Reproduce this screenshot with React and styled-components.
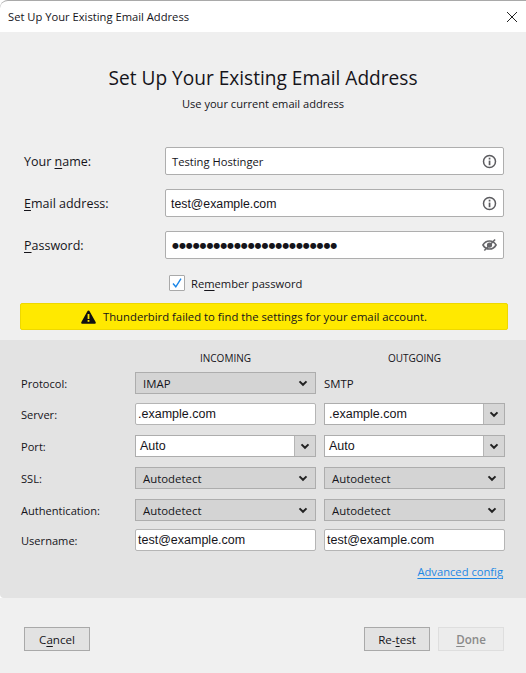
import React from "react";
import styled, { createGlobalStyle } from "styled-components";

const Global = createGlobalStyle`
  html, body { margin: 0; padding: 0; background: #fff; }
  body { font-family: "Open Sans", "Noto Sans", "Liberation Sans", sans-serif; color: #15141a; }
  * { box-sizing: border-box; }
`;

const Window = styled.div`
  width: 526px;
  height: 673px;
  display: flex;
  flex-direction: column;
  overflow: hidden;
`;

const TitleBar = styled.div`
  height: 32px;
  flex: none;
  display: flex;
  align-items: center;
  justify-content: space-between;
  padding: 0 8px 0 8px;
  background: #fff;
  border-top: 1px solid #a9a9a9;
  border-top-left-radius: 8px;
  font-size: 11.2px;
`;

const Intro = styled.div`
  height: 115px;
  flex: none;
  padding-top: 33px;
  text-align: center;
  background: #efefef;
`;

const Heading = styled.div`
  font-size: 19.1px;
  line-height: 26px;
`;

const Sub = styled.div`
  font-size: 11.1px;
  line-height: 16px;
  margin-top: 5px;
`;

const Form = styled.div`
  height: 193px;
  flex: none;
  padding: 0 18px 0 24px;
  display: flex;
  flex-direction: column;
  background: #efefef;
`;

const Row = styled.div`
  display: grid;
  grid-template-columns: 141px 339px;
  align-items: center;
  height: 28px;
  margin-bottom: 14px;
  font-size: 12.5px;
`;

const Field = styled.div`
  height: 28px;
  display: flex;
  align-items: center;
  justify-content: space-between;
  padding: 0 6px 0 5px;
  background: #fff;
  border: 1px solid #aeaeae;
  border-radius: 2px;
`;

const Value = styled.span`
  font-family: ${(p) => (p.$typed ? '"Liberation Sans", sans-serif' : "inherit")};
  font-size: ${(p) => (p.$typed ? "12.3px" : "11.2px")};
  margin: ${(p) => (p.$typed ? "2px 0 0 0" : "0 0 0 1px")};
`;

const Dots = styled.span`
  font-family: "DejaVu Sans", sans-serif;
  font-size: 7.9px;
  margin-left: 1px;
`;

const U = styled.span`
  text-decoration: underline;
  text-underline-offset: 2px;
`;

const Remember = styled.div`
  display: flex;
  align-items: center;
  gap: 6px;
  margin: 2px 0 0 145px;
  font-size: 11.2px;
  height: 16px;
`;

const Check = styled.span`
  width: 16px;
  height: 16px;
  display: flex;
  align-items: center;
  justify-content: center;
  background: #fff;
  border: 1px solid #a9a9a9;
  border-radius: 1px;
`;

const Warning = styled.div`
  height: 27px;
  margin: 12px 0 0 -4px;
  width: 488px;
  display: flex;
  align-items: center;
  justify-content: center;
  gap: 7px;
  padding-right: 20px;
  background: #ffe900;
  border: 1px solid #eed800;
  border-radius: 2px;
  font-size: 11.3px;
`;

const Panel = styled.div`
  height: 258px;
  flex: none;
  padding: 10px 21px 0 21px;
  background: #e3e3e3;
  border-radius: 0 0 0 4px;
  font-size: 11.1px;
  display: grid;
  grid-template-columns: 114px 181px 189px;
  grid-auto-rows: auto;
  align-content: start;
`;

const Head = styled.div`
  font-size: 10px;
  font-weight: 500;
  text-align: center;
  line-height: 16px;
  margin-left: ${(p) => (p.$second ? "8px" : "0")};
`;

const Label = styled.div`
  display: flex;
  align-items: center;
  margin-top: ${(p) => p.$top || 0}px;
  height: 22px;
`;

const Cell = styled.div`
  margin-top: ${(p) => p.$top || 0}px;
  margin-left: ${(p) => (p.$second ? "8px" : "0")};
  height: 22px;
  font-size: 11.4px;
  display: flex;
  align-items: center;
  min-width: 0;
`;

const Select = styled.div`
  flex: 1;
  height: 22px;
  display: flex;
  align-items: center;
  justify-content: space-between;
  padding: 0 7px 0 7px;
  background: #d4d4d4;
  border: 1px solid #adadad;
`;

const TextBox = styled.div`
  flex: 1;
  height: 22px;
  display: flex;
  align-items: center;
  padding: 0 2px 1px;
  background: #fff;
  border: 1px solid #b5b5b5;
  border-radius: 2px;
  overflow: hidden;
  font-family: "Liberation Sans", sans-serif;
  font-size: 12.5px;
`;

const Combo = styled.div`
  flex: 1;
  height: 22px;
  display: flex;
  align-items: stretch;
  background: #fff;
  border: 1px solid #adadad;
`;

const ComboText = styled.div`
  flex: 1;
  display: flex;
  align-items: center;
  padding-left: 4px;
  font-family: "Liberation Sans", sans-serif;
  font-size: 12.5px;
`;

const ComboArrow = styled.div`
  width: 21px;
  display: flex;
  align-items: center;
  justify-content: center;
  background: #d6d6d6;
  border-left: 1px solid #b5b5b5;
`;

const Advanced = styled.div`
  grid-column: 1 / -1;
  text-align: right;
  color: #1e88e5;
  font-size: 11.2px;
  line-height: 16px;
  padding: 13px 2px 0 0;
`;

const Footer = styled.div`
  flex: 1;
  display: flex;
  align-items: flex-start;
  gap: 8px;
  padding: 29px 22px 0 24px;
  background: #f0f0f0;
`;

const Button = styled.div`
  width: 66px;
  height: 24px;
  display: flex;
  align-items: center;
  justify-content: center;
  background: ${(p) => (p.$disabled ? "#ececec" : "#e2e2e2")};
  border: 1px solid ${(p) => (p.$disabled ? "#dedede" : "#a9a9a9")};
  color: ${(p) => (p.$disabled ? "#8a8a8a" : "#15141a")};
  font-weight: ${(p) => (p.$disabled ? 600 : 400)};
  font-size: 11.6px;
  margin-right: ${(p) => (p.$push ? "auto" : 0)};
`;

const Chevron = () => (
  <svg width="10" height="7" viewBox="0 0 10 7" fill="none">
    <path d="M1.500 1.400 5 4.800l3.500-3.400" stroke="#222" strokeWidth="2" />
  </svg>
);

const Info = () => (
  <svg width="15" height="15" viewBox="0 0 15 15" fill="none">
    <circle cx="7.500" cy="7.500" r="6" stroke="#5b5b5f" strokeWidth="1.500" />
    <rect x="6.700" y="6.600" width="1.700" height="4.600" fill="#5b5b5f" />
    <rect x="6.700" y="3.700" width="1.700" height="1.800" fill="#5b5b5f" />
  </svg>
);

const EyeOff = () => (
  <svg width="15" height="14" viewBox="0 0 16 14" fill="none">
    <path d="M1 7c1.600-2.800 4-4.300 7-4.300S13.400 4.200 15 7c-1.600 2.800-4 4.300-7 4.300S2.600 9.800 1 7Z" stroke="#66666a" strokeWidth="1.700" />
    <circle cx="8" cy="7" r="2.800" fill="#66666a" />
    <path d="M2.500 12.800 14 1.200" stroke="#66666a" strokeWidth="1.700" />
  </svg>
);

const Tick = () => (
  <svg width="12" height="12" viewBox="0 0 12 12" fill="none">
    <path d="M2 6.500 4.800 9.800 10 1.600" stroke="#1a86e8" strokeWidth="1.400" />
  </svg>
);

const WarnIcon = () => (
  <svg width="15" height="14" viewBox="0 0 15 14">
    <path d="M7.500.6c.5 0 .9.3 1.100.7l6 10.800c.5.800-.1 1.700-1 1.700H1.400c-.9 0-1.500-.9-1-1.700l6-10.800c.2-.4.600-.7 1.100-.7Z" fill="#111" />
    <rect x="6.600" y="4" width="1.800" height="5" fill="#ffe900" />
    <rect x="6.600" y="10" width="1.800" height="1.800" fill="#ffe900" />
  </svg>
);

const Close = () => (
  <svg width="12" height="12" viewBox="0 0 12 12" fill="none">
    <path d="M1 1l10 10M11 1 1 11" stroke="#222" strokeWidth="1" />
  </svg>
);

const rows = [
  { label: "SSL:", top: 10, a: "Autodetect", b: "Autodetect" },
  { label: "Authentication:", top: 10, a: "Autodetect", b: "Autodetect" },
];

export default function App() {
  return (
    <Window>
      <Global />
      <TitleBar>
        <span>Set Up Your Existing Email Address</span>
        <Close />
      </TitleBar>
      <Intro>
        <Heading>Set Up Your Existing Email Address</Heading>
        <Sub>Use your current email address</Sub>
      </Intro>
      <Form>
        <Row>
          <span>Your <U>n</U>ame:</span>
          <Field><Value>Testing Hostinger</Value><Info /></Field>
        </Row>
        <Row>
          <span><U>E</U>mail address:</span>
          <Field><Value $typed>test@example.com</Value><Info /></Field>
        </Row>
        <Row>
          <span><U>P</U>assword:</span>
          <Field><Dots>{"●".repeat(24)}</Dots><EyeOff /></Field>
        </Row>
        <Remember>
          <Check><Tick /></Check>
          <span>Re<U>m</U>ember password</span>
        </Remember>
        <Warning>
          <WarnIcon />
          <span>Thunderbird failed to find the settings for your email account.</span>
        </Warning>
      </Form>
      <Panel>
        <div />
        <Head>INCOMING</Head>
        <Head $second>OUTGOING</Head>

        <Label $top={6}>Protocol:</Label>
        <Cell $top={6}><Select>IMAP<Chevron /></Select></Cell>
        <Cell $top={6} $second>SMTP</Cell>

        <Label $top={9}>Server:</Label>
        <Cell $top={9}><TextBox>.example.com</TextBox></Cell>
        <Cell $top={9} $second>
          <Combo><ComboText>.example.com</ComboText><ComboArrow><Chevron /></ComboArrow></Combo>
        </Cell>

        <Label $top={10}>Port:</Label>
        <Cell $top={10}>
          <Combo><ComboText>Auto</ComboText><ComboArrow><Chevron /></ComboArrow></Combo>
        </Cell>
        <Cell $top={10} $second>
          <Combo><ComboText>Auto</ComboText><ComboArrow><Chevron /></ComboArrow></Combo>
        </Cell>

        {rows.map((r) => (
          <React.Fragment key={r.label}>
            <Label $top={r.top}>{r.label}</Label>
            <Cell $top={r.top}><Select>{r.a}<Chevron /></Select></Cell>
            <Cell $top={r.top} $second><Select>{r.b}<Chevron /></Select></Cell>
          </React.Fragment>
        ))}

        <Label $top={8}>Username:</Label>
        <Cell $top={8}><TextBox>test@example.com</TextBox></Cell>
        <Cell $top={8} $second><TextBox>test@example.com</TextBox></Cell>

        <Advanced><U>Advanced config</U></Advanced>
      </Panel>
      <Footer>
        <Button $push>C<U>a</U>ncel</Button>
        <Button>Re-<U>t</U>est</Button>
        <Button $disabled><U>D</U>one</Button>
      </Footer>
    </Window>
  );
}
